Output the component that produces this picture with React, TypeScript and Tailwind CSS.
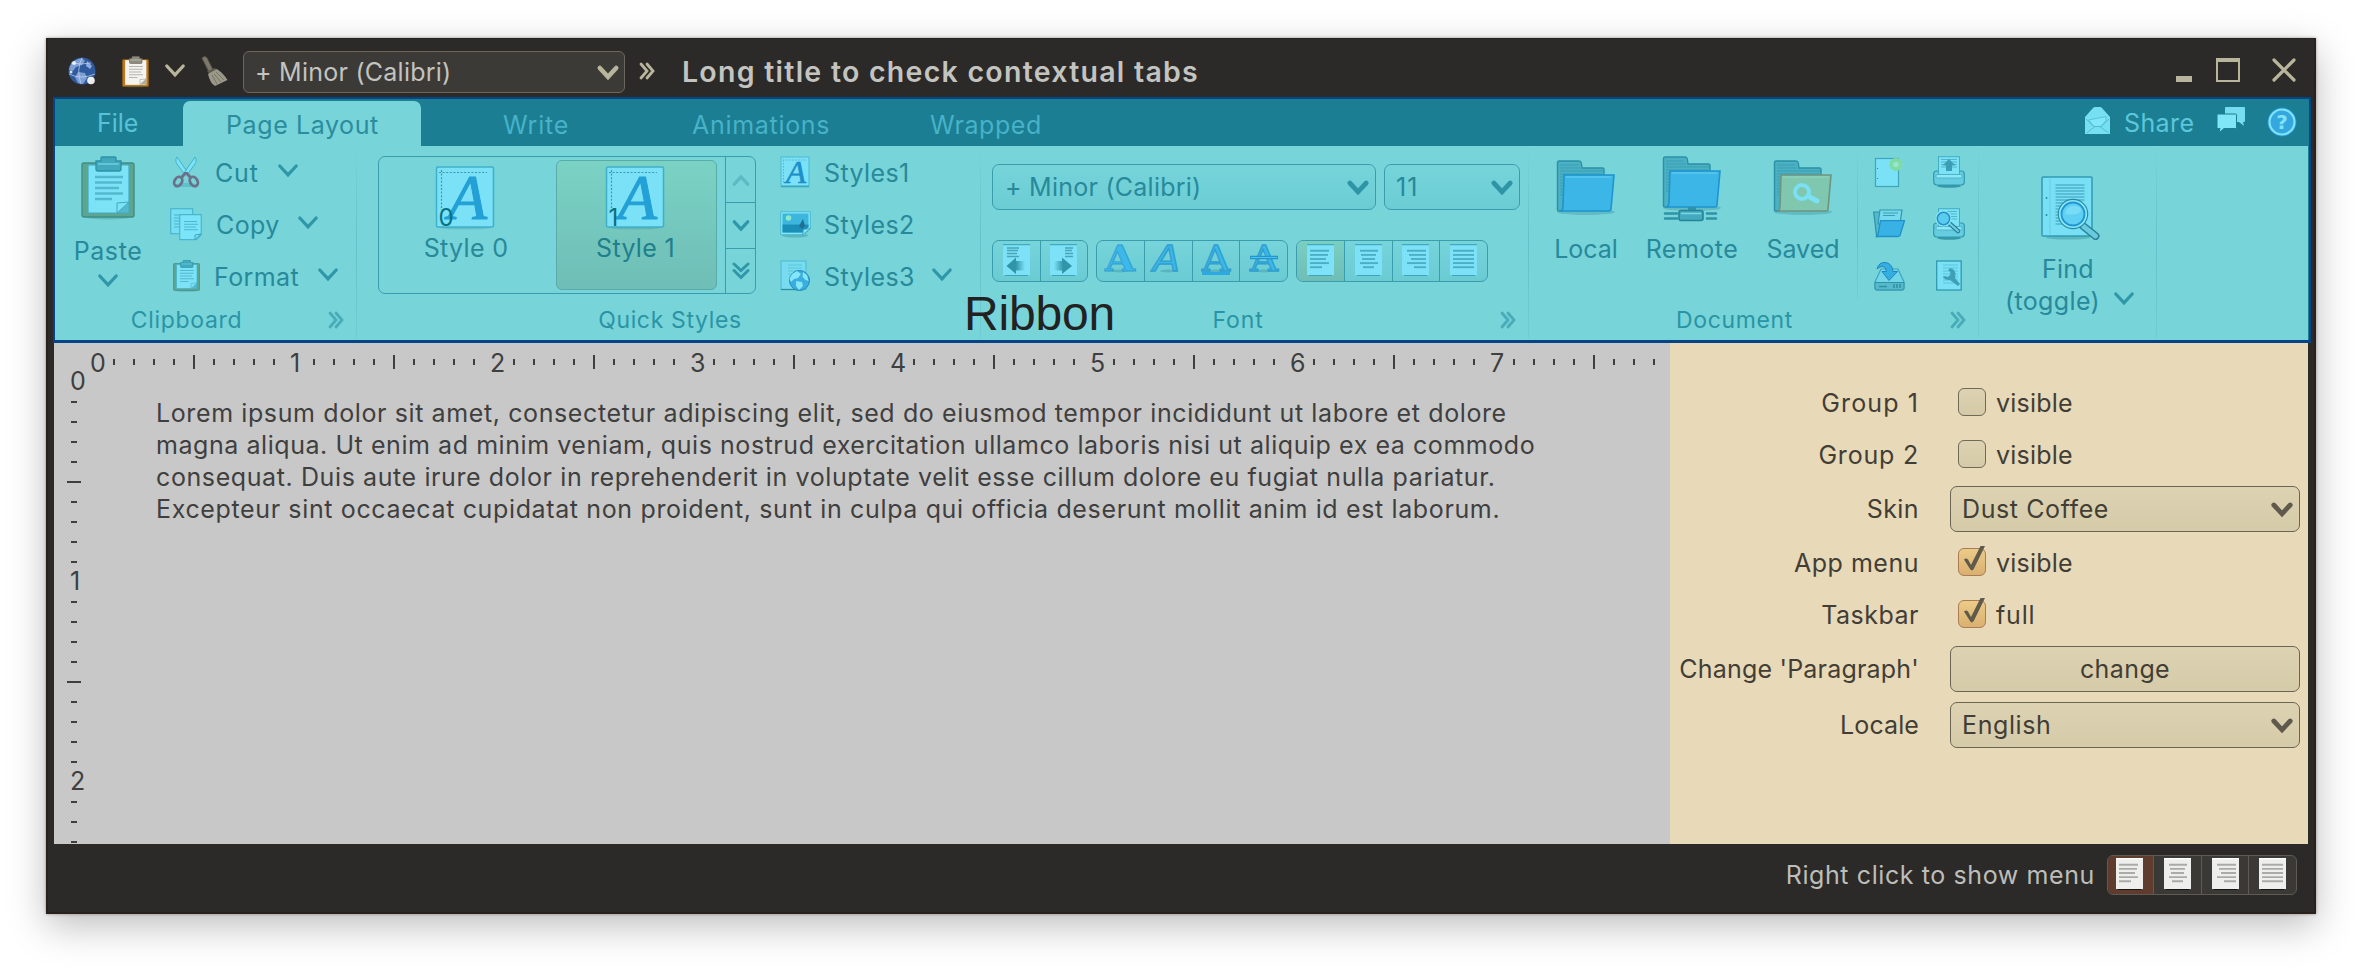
import type { ReactNode } from "react";

type Dir = "down" | "up";

function Chevron({ className = "", dir = "down", thick = 3.3 }: { className?: string; dir?: Dir; thick?: number }) {
  return (
    <svg className={`h-[13px] w-[22px] shrink-0 overflow-visible ${className}`} viewBox="0 0 22 13" fill="none" stroke="currentColor" strokeWidth={thick} strokeLinecap="round">
      <path d={dir === "down" ? "M2.800 2 11 10.800 19.200 2" : "M2.800 11 11 2.200 19.200 11"} />
    </svg>
  );
}

function DoubleChevron({ className = "" }: { className?: string }) {
  return (
    <svg className={`h-[18px] w-[16px] shrink-0 ${className}`} viewBox="0 0 16 18" fill="none" stroke="currentColor" strokeWidth="2.800" strokeLinecap="round">
      <path d="M2 2 8 9 2 16M8 2 14 9 8 16" />
    </svg>
  );
}

function Clipboard({ className = "", warm = false }: { className?: string; warm?: boolean }) {
  const board = warm ? "#b87a1e" : "#5ea58f";
  const edge = warm ? "#8a5a12" : "#3f8f86";
  const paper = warm ? "#f4f3ef" : "#7ce2f6";
  const paperEdge = warm ? "#fdfdfb" : "#41acc4";
  const ink = warm ? "#b5b4ae" : "#53b9cf";
  const clip = warm ? "#8d8b7f" : "#42a9bd";
  return (
    <svg className={`shrink-0 ${className}`} viewBox="0 0 54 64">
      <ellipse cx="27" cy="61" rx="22" ry="2.5" fill="#1d6f80" opacity=".25" />
      <rect x="1" y="7" width="52" height="54" rx="2" fill={board} stroke={edge} strokeWidth="1.4" />
      <path d="M7 9h41v48H7z" fill={paper} stroke={paperEdge} strokeWidth="1.2" />
      <path d="M48 46v11H36z" fill={clip} opacity=".7" />
      <path d="M36 57V47l12-1z" fill={paper} stroke={clip} strokeWidth="1" />
      <path d="M14 21h28M14 26.5h27M14 32h24M14 37.5h28M14 43h17" stroke={ink} strokeWidth="2.4" />
      <path d="M20 5V2q0-1 1-1h13q1 0 1 1v3h5v8q0 2-2 2H17q-2 0-2-2V5z" fill={clip} stroke={warm ? "#6d6b60" : "#2b91a7"} strokeWidth="1.3" />
      <path d="M17 8h21" stroke={warm ? "#b9b7aa" : "#62c4d6"} strokeWidth="2" />
    </svg>
  );
}

function Scissors() {
  return (
    <svg className="h-8 w-[30px] shrink-0" viewBox="0 0 30 32">
      <ellipse cx="15" cy="29" rx="10" ry="2" fill="#2b91a7" opacity=".3" />
      <path d="M6 1c-2 3-1 5 0 7l8 11 3-2z" fill="#7ce2f6" stroke="#41acc4" strokeWidth=".9" />
      <path d="M24 1c2 3 1 5 0 7l-8 11-3-2z" fill="#7ce2f6" stroke="#41acc4" strokeWidth=".9" />
      <g fill="none" stroke="#6a7189" strokeWidth="2.800">
        <ellipse cx="7.2" cy="25.500" rx="3.6" ry="5" transform="rotate(32 7.2 25.5)" />
        <ellipse cx="22.8" cy="25.500" rx="3.6" ry="5" transform="rotate(-32 22.8 25.5)" />
      </g>
      <path d="M11 21l3-3.500h2l3 3.500" stroke="#6a7189" strokeWidth="2.800" fill="none" />
    </svg>
  );
}

function CopyIcon() {
  return (
    <svg className="h-[33px] w-8 shrink-0" viewBox="0 0 32 33">
      <rect x=".7" y=".7" width="22" height="25" fill="#78dff3" stroke="#4ab6cd" strokeWidth="1.2" />
      <path d="M4 7h6M4 10h6M4 13h6M4 16h6M4 19h5" stroke="#4ab6cd" strokeWidth="1.1" />
      <path d="M9.7 6.7h21.6v20l-5 5H9.7z" fill="#7ce4f8" stroke="#4ab6cd" strokeWidth="1.2" />
      <path d="M14 13.5h13M14 16.3h14M14 19h12M14 21.800h14" stroke="#4ab6cd" strokeWidth="1.1" />
      <path d="M25 31.500V27l6-1z" fill="#7ce4f8" stroke="#3aa5bd" strokeWidth="1" />
    </svg>
  );
}

function StyleSheetIcon({ digit }: { digit: string }) {
  return (
    <svg className="h-[64px] w-[60px] shrink-0 overflow-visible" viewBox="0 0 60 64">
      <ellipse cx="30" cy="61.500" rx="26" ry="2" fill="#1d6f80" opacity=".2" />
      <rect x="1.500" y="1" width="57" height="60" rx="1.500" fill="#7ae1f6" stroke="#3fb0c9" strokeWidth="1.500" />
      <path d="M4 6.500h48M6.500 4v40" stroke="#4596a8" strokeWidth="1.200" strokeDasharray="2 1.600" />
      <text x="13" y="53" fontFamily="'Liberation Serif', serif" fontStyle="italic" fontSize="63" textLength="39" lengthAdjust="spacingAndGlyphs" fill="#23a0d6" stroke="#23a0d6" strokeWidth="1">A</text>
      <text x="3.500" y="59.500" fontFamily="Inter, sans-serif" fontSize="24" fill="#077082">{digit}</text>
    </svg>
  );
}

function SmallStyleIcon() {
  return (
    <svg className="h-8 w-[31px] shrink-0 overflow-visible" viewBox="0 0 31 32">
      <rect x="1" y="1" width="28" height="29" fill="#7ae1f6" stroke="#4db9d0" strokeWidth="1" />
      <path d="M1 30.500h28" stroke="#3aa5bd" strokeWidth="1.500" />
      <path d="M3 4h24M3.500 4v24" stroke="#56b4c6" strokeWidth="1" strokeDasharray="1.500 1.500" />
      <text x="6" y="26.500" fontFamily="'Liberation Serif', serif" fontStyle="italic" fontSize="31" textLength="20" lengthAdjust="spacingAndGlyphs" fill="#1d8fca" stroke="#1d8fca" strokeWidth=".6">A</text>
    </svg>
  );
}

function ImageIcon() {
  return (
    <svg className="h-8 w-[31px] shrink-0" viewBox="0 0 31 32">
      <ellipse cx="15" cy="27.500" rx="13" ry="2" fill="#1d6f80" opacity=".3" />
      <path d="M.7 3.700h29.600v17l-6 6H.7z" fill="#85e6f8" stroke="#4db9d0" strokeWidth="1" />
      <path d="M2.500 5.500h26v13l-6 6h-20z" fill="#3cb6dd" />
      <path d="M2.500 16.500h26v3l-6 5h-20z" fill="#1b8fb8" />
      <circle cx="8.500" cy="10" r="2.800" fill="#8be8c8" />
      <path d="M19 18l4-7 2 7-3 3z" fill="#1f6f92" />
      <path d="M22.500 26.500l1-5 7-1z" fill="#8ee9fa" stroke="#3aa5bd" strokeWidth=".8" />
    </svg>
  );
}

function WebPageIcon() {
  return (
    <svg className="h-8 w-[31px] shrink-0" viewBox="0 0 31 32">
      <rect x="1" y="1" width="25" height="28.500" fill="#78dcf0" stroke="#4db9d0" strokeWidth="1" />
      <path d="M8 5h14M8 8h14M8 11h12M8 14h8" stroke="#5cc6da" strokeWidth="1.200" />
      <path d="M1 29.500h20" stroke="#2b8fa3" strokeWidth="1.300" />
      <circle cx="19.500" cy="20.500" r="10" fill="#3aaede" stroke="#2187b8" strokeWidth="1" />
      <path d="M12 14l5-3 4 3-3 4-4 1-3 3-1.500-3zM16 21l6 1 1 4-4 4-3-4zM23 12l4 3 1.500 6-3-1-3-3z" fill="#85e6f8" />
    </svg>
  );
}

const ALIGN: Record<string, number[][]> = {
  left: [[3, 22], [3, 21], [3, 19], [3, 22], [3, 15]],
  center: [[5, 23], [6, 21], [7, 20], [5, 23], [8, 19]],
  right: [[5, 24], [7, 24], [9, 24], [5, 24], [12, 24]],
  full: [[3, 24], [3, 24], [3, 24], [3, 24], [3, 24]],
};

function AlignIcon({ kind, paper = false }: { kind: string; paper?: boolean }) {
  return (
    <svg className="h-8 w-[27px] shrink-0" viewBox="0 0 27 32">
      <rect x="0" y="0" width="27" height="31" fill={paper ? "#eeeeec" : "#7de2f7"} />
      <path d="M0 .6h27" stroke={paper ? "#ffffff" : "#46aabd"} strokeWidth="1.200" />
      <path d="M2 31.500h23" stroke={paper ? "#151515" : "#3fa5b5"} strokeWidth="1" />
      {ALIGN[kind].map(([a, b], i) => (
        <path key={i} d={`M${a} ${6.8 + i * 4.1}H${b}`} stroke={paper ? "#aaaaa6" : "#49afc4"} strokeWidth="1.900" />
      ))}
    </svg>
  );
}

function IndentIcon({ right = false }: { right?: boolean }) {
  return (
    <svg className="h-8 w-[27px] shrink-0" viewBox="0 0 27 32">
      <defs>
        <linearGradient id={right ? "fadeR" : "fadeL"} x1={right ? "0" : "1"} x2={right ? "1" : "0"} y1="0" y2="0">
          <stop offset="0" stopColor="#2f95a8" stopOpacity="0" />
          <stop offset=".5" stopColor="#2f95a8" />
        </linearGradient>
      </defs>
      <rect width="27" height="31" fill="#7de2f7" />
      <path d="M0 .6h27" stroke="#46aabd" strokeWidth="1.200" />
      <path d="M2 31.500h23" stroke="#3fa5b5" />
      {right ? (
        <>
          <path d="M15 4h8M15 6.500h7M15 9.500h8M15 12.500h8" stroke="#4aa5b8" strokeWidth="1.300" />
          <path d="M4 17h8v-3.500l10 8.500-10 8v-3.500H4z" fill="url(#fadeR)" />
        </>
      ) : (
        <>
          <path d="M4 4h12M4 6.500h11M4 9.500h10M4 12.500h12" stroke="#4aa5b8" strokeWidth="1.300" />
          <path d="M22 17h-9v-3.500L3.500 22l9.500 8v-3.500h9z" fill="url(#fadeL)" />
        </>
      )}
    </svg>
  );
}

function LetterIcon({ kind }: { kind: "bold" | "italic" | "underline" | "strike" }) {
  const bold = kind === "bold";
  const italic = kind === "italic";
  return (
    <svg className="h-8 w-[30px] shrink-0 overflow-visible" viewBox="0 0 30 32">
      <ellipse cx="15" cy="27" rx="8" ry="1.500" fill="#1d6f80" opacity=".25" />
      <text
        x={bold ? 0 : italic ? 0 : 1}
        y="27"
        fontFamily={italic ? "'DejaVu Sans', sans-serif" : "'DejaVu Serif', serif"}
        fontWeight={bold ? "bold" : "normal"}
        fontStyle={italic ? "italic" : "normal"}
        fontSize="35.500"
        textLength={bold ? 30 : italic ? 27 : 28}
        lengthAdjust="spacingAndGlyphs"
        fill="#3cb8ea"
        stroke="#2f9fd0"
        strokeWidth={bold ? 0.9 : 1.3}
      >
        A
      </text>
      {kind === "underline" && <path d="M1 29.500h28" stroke="#2ba9e0" strokeWidth="3" />}
      {kind === "strike" && <path d="M1 13.500h28" stroke="#2496cb" strokeWidth="3.500" />}
      {kind === "strike" && <path d="M2 13.500h26" stroke="#4cc2ee" strokeWidth="1.200" />}
    </svg>
  );
}

function FolderIcon({ kind }: { kind: "local" | "remote" | "saved" }) {
  const saved = kind === "saved";
  return (
    <svg className="h-[66px] w-[60px] shrink-0" viewBox="0 0 60 66">
      <g transform={kind === "remote" ? "translate(0 0)" : "translate(0 4)"}>
        <ellipse cx="30" cy="52" rx="29" ry="3" fill="#1d6f80" opacity=".25" />
        <path d="M1.500 50V2.500q0-1.500 1.500-1.500h20q2 0 2.300 2l.7 5h20.500q1.500 0 1.500 1.500V30L6 51H3q-1.500 0-1.500-1z" fill="#4bb0c2" stroke="#2b90a6" strokeWidth="1.400" />
        <path d="M4 5h18M4 8h20M4 11h43M4 14h42M4 17h3M4 20h3M4 23h3M4 26h3M4 29h3M4 32h3M4 35h3" stroke="#3a9fb4" strokeWidth="1" />
        <path d="M8 15h50l-3 34q-.2 2-2 2H5.500Q7 49 7 46z" fill={saved ? "#7fc7ae" : "#3cb6e6"} stroke={saved ? "#6f9482" : "#1d95cf"} strokeWidth="1.600" />
        <path d="M9.500 17h46" stroke={saved ? "#93d6bd" : "#66d0f2"} strokeWidth="1.200" />
        {saved && (
          <g fill="none" stroke="#7be0f4" strokeLinecap="round">
            <circle cx="29" cy="32" r="7" strokeWidth="4" />
            <path d="M35 36l9 5" strokeWidth="5" />
          </g>
        )}
      </g>
      {kind === "remote" && (
        <g>
          <path d="M26 51h8v5h-8z" fill="#2f93a8" />
          <path d="M3 57.500h12M45 57.500h9M3 62.500h12M45 62.500h9" stroke="#2f93a8" strokeWidth="2.500" strokeLinecap="round" />
          <rect x="17" y="54.500" width="24" height="10" rx="2" fill="#46aabe" stroke="#23859a" strokeWidth="1.600" />
          <path d="M19 57.500h20" stroke="#7bd7e6" strokeWidth="1.500" />
        </g>
      )}
    </svg>
  );
}

function NewDocIcon() {
  return (
    <svg className="h-8 w-8 shrink-0" viewBox="0 0 32 32">
      <rect x="2.500" y="2.500" width="23" height="28" fill="#7ae1f6" stroke="#3fa5bd" strokeWidth="1.200" />
      <path d="M4.500 12v1M4.500 22v1" stroke="#2b8fa3" strokeWidth="1.200" />
      <circle cx="23" cy="8.500" r="6.500" fill="#7fdca0" />
      <circle cx="23" cy="8.500" r="2.800" fill="#93e7d0" />
    </svg>
  );
}

function PrinterIcon({ zoom = false }: { zoom?: boolean }) {
  return (
    <svg className="h-8 w-8 shrink-0" viewBox="0 0 32 32">
      <ellipse cx="16" cy="30" rx="12" ry="1.800" fill="#1d7f93" opacity=".7" />
      <path d="M.7 18q0-3 3-3h24.600q3 0 3 3v8q0 2.500-3 3H3.700q-3-.5-3-3z" fill="#66cde0" stroke="#3298ae" strokeWidth="1.200" />
      <rect x="5.500" y=".7" width="21" height="18" fill="#7ce2f6" stroke="#41acc4" />
      <path d="M8 3.500h16M8 6h16M8 8.500h16M8 11h16" stroke="#52b6cb" strokeWidth="1" />
      <rect x="3" y="18.500" width="26" height="3.500" rx="1.500" fill="#8be8f8" stroke="#46aabd" strokeWidth=".8" />
      {!zoom && <path d="M16 3l6.500 6.500H19V15h-6V9.500H9.500z" fill="#3a9fb6" />}
      {zoom && (
        <g>
          <path d="M16 15l9 8" stroke="#2b8299" strokeWidth="4.500" strokeLinecap="round" />
          <path d="M16 15l9 8" stroke="#6fd0e2" strokeWidth="2" strokeLinecap="round" />
          <circle cx="10.500" cy="10.500" r="7" fill="#5accf0" stroke="#8fe9f8" strokeWidth="2" />
          <circle cx="10.500" cy="10.500" r="6.200" fill="none" stroke="#2390c6" strokeWidth="1.500" />
        </g>
      )}
    </svg>
  );
}

function OpenIcon() {
  return (
    <svg className="h-8 w-8 shrink-0" viewBox="0 0 32 32">
      <path d="M.7 4h6l2 2v22l-5 .5z" fill="#55b9cd" stroke="#2b91a7" strokeWidth="1.200" />
      <path d="M7 2h22l-2 14H5z" fill="#76d9ec" stroke="#3298ae" strokeWidth="1.200" />
      <path d="M10 5h15M10 7.500h12" stroke="#3a9fb6" strokeWidth="1" />
      <path d="M7.500 12.700h24L27 27.500q-.5 1-2 1H3.500Q5 27 5.500 24z" fill="#38b2e4" stroke="#2091c8" strokeWidth="1.300" />
    </svg>
  );
}

function SaveIcon() {
  return (
    <svg className="h-8 w-8 shrink-0" viewBox="0 0 32 32">
      <path d="M8 9h17l6 13v6q0 2-2 2H4q-2 0-2-2v-6z" fill="#72d6e8" stroke="#3fa5bd" strokeWidth="1.200" />
      <path d="M2 22.500h29V28q0 2-2 2H4q-2 0-2-2z" fill="#56b9cc" stroke="#2f93a8" strokeWidth="1" />
      <path d="M6 26.500h8M21 24v4M24 24v4M27 24v4" stroke="#338fa3" strokeWidth="1.500" />
      <path d="M4 9Q6 2 12 2.500q7 .5 8 9h4.500L16 20.500 9 11.500h4.500Q13 7 10 6.500 7 6 4 9z" fill="#34ade0" stroke="#1d87c0" strokeWidth="1" />
    </svg>
  );
}

function PrefsIcon() {
  return (
    <svg className="h-8 w-8 shrink-0" viewBox="0 0 32 32">
      <rect x="3.700" y="1" width="24.500" height="29" fill="#7ae1f6" stroke="#3298ae" strokeWidth="1.300" />
      <path d="M10 5h15M10 8h15M10 11h15M10 14h15M10 17h15M10 20h15M10 23h15" stroke="#5cc6da" strokeWidth="1.100" />
      <path d="M17 8q5 1 5.500 6l-.5 4 5 6-2 2-8-6q-4 .5-7-2.500l1-1.500 4 1 2.500-2.500-.5-3-2-1z" fill="#3fa0b5" />
    </svg>
  );
}

function FindIcon() {
  return (
    <svg className="h-[64px] w-[60px] shrink-0" viewBox="0 0 60 64">
      <ellipse cx="28" cy="61.500" rx="22" ry="2" fill="#1d6f80" opacity=".3" />
      <rect x="2" y="1" width="50" height="59" rx="1" fill="#78dff4" stroke="#2f9cb3" strokeWidth="1.500" />
      <path d="M10 3v55" stroke="#67cfe4" strokeWidth="1" />
      <path d="M6.500 21v2M6.500 38v2" stroke="#2b8fa3" strokeWidth="1.500" />
      <path d="M15.500 9h29M15.500 12h29M15.500 15h29M15.500 18h29M15.500 21h29M15.500 24h29M15.500 27h14M15.500 30h8M15.500 33h6M15.500 36h6M15.500 39h6M15.500 42h8M15.500 45h10M15.500 48h14" stroke="#4fb5cb" strokeWidth="1.300" />
      <path d="M43 50l12.500 10" stroke="#2b7f94" strokeWidth="8" strokeLinecap="round" />
      <path d="M43 50l12.500 10" stroke="#68cadc" strokeWidth="5" strokeLinecap="round" />
      <circle cx="33" cy="38" r="13.500" fill="#5fd0f2" stroke="#2b8ba5" strokeWidth="3.500" />
      <circle cx="33" cy="38" r="13" fill="none" stroke="#8ae8f8" strokeWidth="2.200" />
      <circle cx="33" cy="38" r="11.500" fill="none" stroke="#1f95d2" strokeWidth="1.800" />
      <path d="M25 38q1-8 9-8t7 5q-3 5-16 3z" fill="#8be4f9" opacity=".6" />
    </svg>
  );
}

function GlobeIcon() {
  return (
    <svg className="h-[30px] w-[30px] shrink-0" viewBox="0 0 30 30">
      <circle cx="15" cy="14" r="13.500" fill="#2f5a9e" />
      <path d="M3 9Q7 2 15 1l3 3-3 4-6 2-3 4-4-1zM11 15l7 1 2 5-4 6-5-1-3-6z" fill="#7d9fd4" />
      <path d="M20 4l5 5-2 3-4-3z" fill="#8eace0" />
      <path d="M4 6q10 2 20 0M2 17q12 6 26 0M15 1q-6 12-1 26" stroke="#c7d8f0" strokeWidth=".7" fill="none" />
      <circle cx="24" cy="23.500" r="3.800" fill="#fff" opacity=".9" />
      <circle cx="7" cy="6" r="2" fill="#fff" opacity=".8" />
      <circle cx="4" cy="15" r="1.500" fill="#fff" opacity=".8" />
    </svg>
  );
}

function BroomIcon() {
  return (
    <svg className="h-[31px] w-7 shrink-0" viewBox="0 0 28 31">
      <path d="M1 2q3-3 5 0l6 12-4 2z" fill="#7c796b" stroke="#5c594e" strokeWidth=".8" />
      <path d="M6 15l8-3 3 4-7 4z" fill="#5f5c51" />
      <path d="M7 18l9-5q7 5 10.500 11L14 30Q9 27 7 18z" fill="#9b9888" />
      <path d="M11 19l5 9M13 18l7 8M15 16l8 8" stroke="#77746a" strokeWidth="1" />
    </svg>
  );
}

function EnvelopeIcon() {
  return (
    <svg className="h-[27px] w-[25px] shrink-0" viewBox="0 0 25 27">
      <path d="M0 10 8 1q1-1 2-1h5q1 0 2 1l8 9v17H0z" fill="#76dff2" />
      <path d="M3.500 13l17.500-3.500v4L16 19.500H9z" fill="#80e6f8" stroke="#55bfd4" strokeWidth=".9" />
      <path d="M1.500 26l8.500-6.500h5l8.500 6.500M1 12l8 7.500M24 12l-8 7.500" stroke="#4fb9cf" strokeWidth=".9" fill="none" />
    </svg>
  );
}

function ChatIcon() {
  return (
    <svg className="h-[27px] w-7 shrink-0" viewBox="0 0 28 27">
      <path d="M9 0h18q1 0 1 1v13q0 1-1 1h-1l1 4-5-4H9q-1 0-1-1V1q0-1 1-1z" fill="#76dcef" />
      <path d="M1 7h17.500q1 0 1 1v12.500q0 1-1 1H7L2 26l1-4.500H1q-1 0-1-1V8q0-1 1-1z" fill="#80e5f7" stroke="#1b7e93" strokeWidth="1" />
    </svg>
  );
}

function HelpIcon() {
  return (
    <svg className="h-[30px] w-[30px] shrink-0 overflow-visible" viewBox="0 0 30 30">
      <circle cx="15" cy="15" r="14.500" fill="#2590cf" />
      <circle cx="15" cy="15" r="12.500" fill="#34a8de" stroke="#7fe4f8" strokeWidth="2.200" />
      <text x="15" y="22" textAnchor="middle" fontFamily="'DejaVu Sans', sans-serif" fontWeight="bold" fontSize="20" fill="#7fe4f8">?</text>
    </svg>
  );
}

function SmallCommand({ icon, label, tracking, chevron, labelGap = "ml-[14px]" }: { icon: ReactNode; label: string; tracking: string; chevron?: string; labelGap?: string }) {
  return (
    <div className="flex h-8 items-start">
      <div className="-mt-px flex w-8 justify-center">{icon}</div>
      <span className={`leading-[32px] ${labelGap} ${tracking}`}>{label}</span>
      {chevron && <Chevron className={`mt-[7px] text-[#3097a8] ${chevron}`} />}
    </div>
  );
}

function BandTitle({ label, launcher = false, tracking = "tracking-[0.65px] pl-[3px]" }: { label: string; launcher?: boolean; tracking?: string }) {
  return (
    <div className="flex h-[34px] items-start text-[23px] text-[#2a94a5]">
      <span className={`flex-1 text-center leading-[28px] ${tracking}`}>{label}</span>
      {launcher && <DoubleChevron className="mt-[5px] mr-[12px] ml-[13px] text-[#4aacb9]" />}
    </div>
  );
}

function Band({ className, children, title }: { className: string; children: ReactNode; title?: ReactNode }) {
  return (
    <div className={`flex h-[194px] shrink-0 flex-col ${className}`}>
      <div className="flex h-[160px] items-start">{children}</div>
      {title}
    </div>
  );
}

function Divider({ className = "h-[192px]" }: { className?: string }) {
  return <div className={`w-px shrink-0 bg-linear-to-b from-[#77d4d9] via-[#64c1cb] to-[#70cdd4] ${className}`} />;
}

function StyleCell({ digit, selected = false }: { digit: string; selected?: boolean }) {
  return (
    <div
      className={`flex h-[130px] w-[161px] flex-col items-center rounded-[6px] border pt-[5px] ${
        selected ? "border-[#5aaaa7] bg-linear-to-b from-[#7ad2c4] to-[#6fbeb7] text-[#1f7f8c]" : "border-transparent"
      }`}
    >
      <div className={selected ? "mr-[3px]" : ""}>
        <StyleSheetIcon digit={digit} />
      </div>
      <span className={`mt-[2px] leading-[32px] tracking-[0.3px] ${selected ? "mr-[2px]" : "ml-[3px]"}`}>Style {digit}</span>
    </div>
  );
}

function BigCommand({ className, children, label, tracking }: { className: string; children: ReactNode; label: string; tracking: string }) {
  return (
    <div className={`flex flex-col items-center ${className}`}>
      {children}
      <span className={`mt-[11px] leading-[32px] ${tracking}`}>{label}</span>
    </div>
  );
}

function RibbonCombo({ label, className, tracking }: { label: string; className: string; tracking: string }) {
  return (
    <div className={`flex h-[46px] shrink-0 items-center justify-between rounded-[7px] border border-[#3a9dae] bg-linear-to-b from-[#76d4da] to-[#6bcdd4] pr-[6px] pl-3 ${className}`}>
      <span className={`leading-[32px] ${tracking}`}>{label}</span>
      <Chevron className="text-[#2f95a6]" thick={4.8} />
    </div>
  );
}

function ButtonStrip({ children, className }: { children: ReactNode; className: string }) {
  return <div className={`flex h-[42px] shrink-0 divide-x divide-[#3a9dae] overflow-hidden rounded-[7px] border border-[#3a9dae] bg-linear-to-b from-[#76d4da] to-[#6bcbd3] ${className}`}>{children}</div>;
}

function StripCell({ children, selected = false }: { children: ReactNode; selected?: boolean }) {
  return <div className={`flex flex-1 justify-center pt-[3px] ${selected ? "bg-linear-to-b from-[#79cfc2] to-[#6fbdb7]" : ""}`}>{children}</div>;
}

function HorizontalRuler() {
  return (
    <div className="flex h-[29px] pt-[3px] pl-[30px]">
      {Array.from({ length: 79 }, (_, i) => (
        <div key={i} className="flex h-8 w-5 shrink-0 items-center justify-center">
          {i % 10 === 0 ? (
            <span className="w-5 pt-[2px] pl-[6px] leading-[32px]">{i / 10}</span>
          ) : (
            <div className={`w-[2px] bg-[#3f3f3f] ${i % 5 === 0 ? "h-[14px]" : "h-[6px]"}`} />
          )}
        </div>
      ))}
    </div>
  );
}

function VerticalRuler() {
  return (
    <div className="flex w-[102px] shrink-0 flex-col pl-[10px]">
      {Array.from({ length: 24 }, (_, i) => (
        <div key={i} className="flex h-5 w-5 shrink-0 items-center justify-center">
          {i % 10 === 0 ? (
            <span className="-mt-[2px] w-5 pl-[6px] leading-[20px]">{i / 10}</span>
          ) : (
            <div className={`h-[2px] bg-[#3f3f3f] ${i % 5 === 0 ? "w-[14px]" : "w-[6px]"}`} />
          )}
        </div>
      ))}
    </div>
  );
}

function OptionRow({ label, tall = false, tracking = "tracking-[0.5px]", children }: { label: string; tall?: boolean; tracking?: string; children: ReactNode }) {
  return (
    <div className={`flex items-center ${tall ? "h-14" : "h-[52px]"}`}>
      <span className={`w-[249px] shrink-0 text-right leading-[32px] ${tracking}`}>{label}</span>
      {children}
    </div>
  );
}

function Check({ label, checked = false, tracking = "tracking-[0.2px]" }: { label: string; checked?: boolean; tracking?: string }) {
  return (
    <div className="ml-[39px] flex items-center">
      <div className={`relative -mt-[2px] h-7 w-7 rounded-[6px] border ${checked ? "border-[#a97c55] bg-linear-to-b from-[#eccb89] to-[#dab06f]" : "border-[#6f6a58] bg-linear-to-b from-[#ddd2b1] to-[#d5caa8]"}`}>
        {checked && (
          <svg className="absolute -top-[3px] left-[2px] h-7 w-7" viewBox="0 0 28 28" fill="#5f5a4b">
            <path d="M3 13.500q2-2 4 0l3 5.500 9.500-19h4.500L13 22.500q-2 3.500-4 .5z" />
          </svg>
        )}
      </div>
      <span className={`ml-[10px] leading-[32px] ${tracking}`}>{label}</span>
    </div>
  );
}

function Select({ label }: { label: string }) {
  return (
    <div className="ml-[31px] flex h-[46px] w-[350px] items-center justify-between rounded-[7px] border border-[#6b6654] bg-linear-to-b from-[#ddd2b2] to-[#d5cba9] pr-[6px] pl-[11px]">
      <span className="leading-[32px] tracking-[0.6px]">{label}</span>
      <Chevron className="text-[#5f5a4b]" thick={4.8} />
    </div>
  );
}

export default function App() {
  return (
    <div className="h-[968px] w-[2362px] overflow-hidden bg-white pt-[38px] pl-[46px] font-['Inter',sans-serif] text-[25px] whitespace-nowrap">
      <div className="flex h-[876px] w-[2270px] flex-col border-2 border-t border-[#2b211b] bg-[#2b2a28] shadow-[0_12px_36px_rgba(0,0,0,0.26),0_0_3px_rgba(0,0,0,0.35)]">
        <header className="flex h-[58px] shrink-0 items-start pl-[19px] text-[#c3c3c0]">
          <div className="mt-[18px]">
            <GlobeIcon />
          </div>
          <Clipboard warm className="mt-[17px] ml-[25px] h-8 w-[27px]" />
          <Chevron className="mt-[25px] ml-[15px] text-[#b9b59c]" />
          <div className="mt-[17px] ml-[15px]">
            <BroomIcon />
          </div>
          <div className="mt-[12px] ml-[14px] flex h-[42px] w-[382px] items-center justify-between rounded-[6px] border border-[#6a665c] bg-[#3b3a36] pr-[5px] pl-[11px]">
            <span className="leading-[32px] tracking-[0.25px]">+ Minor (Calibri)</span>
            <Chevron className="text-[#b9b59c]" thick={4.6} />
          </div>
          <DoubleChevron className="mt-[23px] ml-[14px] text-[#b9b59c]" />
          <h1 className="mt-[15px] ml-[27px] text-[28.5px] leading-[36px] font-semibold tracking-[1.26px]">Long title to check contextual tabs</h1>
          <div className="mr-[18px] ml-auto flex text-[#b9b59c]">
            <div className="mt-[37px] h-[6px] w-4 bg-current" />
            <div className="mt-[19px] ml-6 h-6 w-6 border-2 border-t-4 border-current" />
            <svg className="mt-[19px] ml-[32px] h-6 w-6" viewBox="0 0 24 24" stroke="currentColor" strokeWidth="3.200" strokeLinecap="round">
              <path d="M2 2 22 22M22 2 2 22" />
            </svg>
          </div>
        </header>

        <section className="relative ml-[5px] flex h-[246px] w-[2258px] shrink-0 flex-col border-2 border-b-3 border-[#054486] bg-[#1b7e93]">
          <nav className="flex h-[47px] shrink-0 items-start text-[#47b2c8]">
            <span className="mt-[8px] w-[128px] pl-[42px] leading-[32px] text-[#58c3d8]">File</span>
            <div className="mt-[2px] h-[45px] w-[238px] rounded-t-[7px] bg-[#77d4d9] pt-[8px] pl-[43px] leading-[32px] tracking-[0.6px] text-[#2a8c9d]">Page Layout</div>
            <span className="mt-[10px] ml-[82px] w-[188px] leading-[32px] tracking-[0.8px]">Write</span>
            <span className="mt-[10px] w-[239px] pl-px leading-[32px] tracking-[0.7px]">Animations</span>
            <span className="mt-[10px] leading-[32px] tracking-[0.6px]">Wrapped</span>
            <div className="mt-[8px] mr-[12px] ml-auto flex items-start">
              <EnvelopeIcon />
              <span className="ml-[14px] w-[93px] leading-[32px] tracking-[0.4px] text-[#5cc6da]">Share</span>
              <ChatIcon />
              <div className="ml-[22px]">
                <HelpIcon />
              </div>
            </div>
          </nav>

          <div className="mr-px flex h-[194px] shrink-0 items-start bg-[#77d4d9] text-[#27899a]">
            <Band className="w-[301px]" title={<BandTitle label="Clipboard" launcher tracking="tracking-[0.7px] pl-[3px]" />}>
              <div className="ml-[18px] flex w-[70px] flex-col items-center pt-[10px]">
                <Clipboard className="h-16 w-[54px]" />
                <span className="mt-[15px] leading-[32px] tracking-[0.6px]">Paste</span>
                <Chevron className="mt-[7px] text-[#3097a8]" />
              </div>
              <div className="mt-[11px] ml-[27px] flex flex-col gap-5">
                <SmallCommand icon={<Scissors />} label="Cut" tracking="tracking-[0.8px]" chevron="ml-[18px]" labelGap="ml-[13px]" />
                <SmallCommand icon={<CopyIcon />} label="Copy" tracking="tracking-[0.43px]" chevron="ml-[17px]" />
                <SmallCommand icon={<Clipboard className="h-8 w-[27px]" />} label="Format" tracking="tracking-[0.4px]" chevron="ml-[18px]" labelGap="ml-[12px]" />
              </div>
            </Band>
            <Divider />
            <Band className="w-[623px]" title={<BandTitle label="Quick Styles" />}>
              <div className="mt-[10px] ml-[21px] flex h-[138px] w-[378px] rounded-[7px] border border-[#3a9dae]">
                <div className="flex flex-1 gap-[11px] pt-[3px] pl-[5px]">
                  <StyleCell digit="0" />
                  <StyleCell digit="1" selected />
                </div>
                <div className="flex w-[30px] flex-col divide-y divide-[#3a9dae] border-l border-[#3a9dae] text-[#3097a8]">
                  <div className="flex flex-1 items-center justify-center pt-px text-[#5bbac5]">
                    <Chevron dir="up" thick={4} className="!w-[18px]" />
                  </div>
                  <div className="flex flex-1 items-center justify-center">
                    <Chevron thick={4} className="!w-[18px]" />
                  </div>
                  <div className="flex flex-1 items-center justify-center">
                    <svg className="h-[18px] w-[18px]" viewBox="0 0 18 18" fill="none" stroke="currentColor" strokeWidth="3" strokeLinecap="round">
                      <path d="M2 2 9 8.500 16 2M2 8.500 9 15.500 16 8.500" />
                    </svg>
                  </div>
                </div>
              </div>
              <div className="mt-[11px] ml-[23px] flex flex-col gap-5">
                <SmallCommand icon={<SmallStyleIcon />} label="Styles1" tracking="tracking-[0.4px]" labelGap="ml-[13px]" />
                <SmallCommand icon={<ImageIcon />} label="Styles2" tracking="tracking-[0.4px]" labelGap="ml-[13px]" />
                <SmallCommand icon={<WebPageIcon />} label="Styles3" tracking="tracking-[0.4px]" chevron="ml-[16px]" labelGap="ml-[13px]" />
              </div>
            </Band>
            <Divider />
            <Band className="w-[547px]" title={<BandTitle label="Font" launcher tracking="tracking-[0.9px] pl-[8px]" />}>
              <div className="mt-[18px] ml-[11px] flex flex-col gap-[30px]">
                <div className="flex gap-2">
                  <RibbonCombo label="+ Minor (Calibri)" className="w-[384px]" tracking="tracking-[0.25px]" />
                  <RibbonCombo label="11" className="w-[136px]" tracking="tracking-[1.2px] -ml-px" />
                </div>
                <div className="flex gap-2">
                  <ButtonStrip className="w-[96px]">
                    <StripCell><IndentIcon /></StripCell>
                    <StripCell><IndentIcon right /></StripCell>
                  </ButtonStrip>
                  <ButtonStrip className="w-[192px]">
                    <StripCell><LetterIcon kind="bold" /></StripCell>
                    <StripCell><LetterIcon kind="italic" /></StripCell>
                    <StripCell><LetterIcon kind="underline" /></StripCell>
                    <StripCell><LetterIcon kind="strike" /></StripCell>
                  </ButtonStrip>
                  <ButtonStrip className="w-[192px]">
                    <StripCell selected><AlignIcon kind="left" /></StripCell>
                    <StripCell><AlignIcon kind="center" /></StripCell>
                    <StripCell><AlignIcon kind="right" /></StripCell>
                    <StripCell><AlignIcon kind="full" /></StripCell>
                  </ButtonStrip>
                </div>
              </div>
            </Band>
            <Divider />
            <Band className="w-[449px]" title={<BandTitle label="Document" launcher />}>
              <div className="mt-[10px] ml-[16px] flex">
                <BigCommand className="w-[82px]" label="Local" tracking=""><FolderIcon kind="local" /></BigCommand>
                <BigCommand className="ml-[13px] w-[104px]" label="Remote" tracking="tracking-[0.5px]"><FolderIcon kind="remote" /></BigCommand>
                <BigCommand className="ml-[19px] w-[80px]" label="Saved" tracking=""><FolderIcon kind="saved" /></BigCommand>
              </div>
              <Divider className="ml-[14px] h-[152px]" />
              <div className="mt-[10px] ml-[15px] grid grid-cols-2 gap-x-7 gap-y-5">
                <NewDocIcon />
                <PrinterIcon />
                <OpenIcon />
                <PrinterIcon zoom />
                <SaveIcon />
                <PrefsIcon />
              </div>
            </Band>
            <Divider />
            <Band className="w-[177px]">
              <div className="ml-[26px] flex flex-col pt-[30px]">
                <div className="ml-[35px]">
                  <FindIcon />
                </div>
                <span className="mt-[13px] ml-[37px] leading-[32px] tracking-[0.2px]">Find</span>
                <div className="flex items-start">
                  <span className="leading-[32px] tracking-[0.36px]">(toggle)</span>
                  <Chevron className="mt-[7px] ml-[13px] text-[#3097a8]" />
                </div>
              </div>
            </Band>
            <Divider />
          </div>
          <span className="absolute top-[188px] left-[909px] font-['Liberation_Sans',sans-serif] text-[48px] leading-[54px] tracking-[-0.2px] text-[#222222]">Ribbon</span>
        </section>

        <main className="ml-[6px] flex h-[501px] w-[2254px] shrink-0">
          <div className="flex w-[1616px] flex-col overflow-hidden bg-[#c8c8c8] text-[#3f3f3f]">
            <HorizontalRuler />
            <div className="flex">
              <VerticalRuler />
              <div className="pt-[25px] leading-[32px]">
                <p className="tracking-[0.61px]">Lorem ipsum dolor sit amet, consectetur adipiscing elit, sed do eiusmod tempor incididunt ut labore et dolore</p>
                <p className="tracking-[0.56px]">magna aliqua. Ut enim ad minim veniam, quis nostrud exercitation ullamco laboris nisi ut aliquip ex ea commodo</p>
                <p className="tracking-[0.6px]">consequat. Duis aute irure dolor in reprehenderit in voluptate velit esse cillum dolore eu fugiat nulla pariatur.</p>
                <p className="tracking-[0.635px]">Excepteur sint occaecat cupidatat non proident, sunt in culpa qui officia deserunt mollit anim id est laborum.</p>
              </div>
            </div>
          </div>
          <aside className="flex w-[638px] flex-col bg-[#e8d9b9] pt-[34px] text-[#423e35]">
            <OptionRow label="Group 1" tracking="tracking-[1.1px]"><Check label="visible" /></OptionRow>
            <OptionRow label="Group 2" tracking="tracking-[0.8px]"><Check label="visible" /></OptionRow>
            <OptionRow label="Skin" tall tracking="tracking-[0.4px]"><Select label="Dust Coffee" /></OptionRow>
            <OptionRow label="App menu"><Check label="visible" checked /></OptionRow>
            <OptionRow label="Taskbar"><Check label="full" checked tracking="tracking-[0.8px]" /></OptionRow>
            <OptionRow label="Change 'Paragraph'" tall tracking="tracking-[0.2px]">
              <button className="ml-[31px] h-[46px] w-[350px] rounded-[7px] border border-[#6b6654] bg-linear-to-b from-[#ddd2b2] to-[#d5cba9] leading-[32px] tracking-[0.4px]">change</button>
            </OptionRow>
            <OptionRow label="Locale" tall tracking="tracking-[0.1px]"><Select label="English" /></OptionRow>
          </aside>
        </main>

        <footer className="flex flex-1 items-start justify-end pr-[17px] text-[#bdbdba]">
          <span className="mt-[15px] leading-[32px] tracking-[0.6px]">Right click to show menu</span>
          <div className="mt-[11px] ml-[12px] flex h-10 w-[190px] divide-x divide-[#5d5b54] overflow-hidden rounded-[6px] border border-[#5d5b54] bg-[#3a3935]">
            <div className="flex w-[46px] justify-center bg-[#5f3c2e] pt-[2px] pr-[3px]"><AlignIcon kind="left" paper /></div>
            <div className="flex flex-1 justify-center pt-[2px]"><AlignIcon kind="center" paper /></div>
            <div className="flex flex-1 justify-center pt-[2px]"><AlignIcon kind="right" paper /></div>
            <div className="flex flex-1 justify-center pt-[2px]"><AlignIcon kind="full" paper /></div>
          </div>
        </footer>
      </div>
    </div>
  );
}
